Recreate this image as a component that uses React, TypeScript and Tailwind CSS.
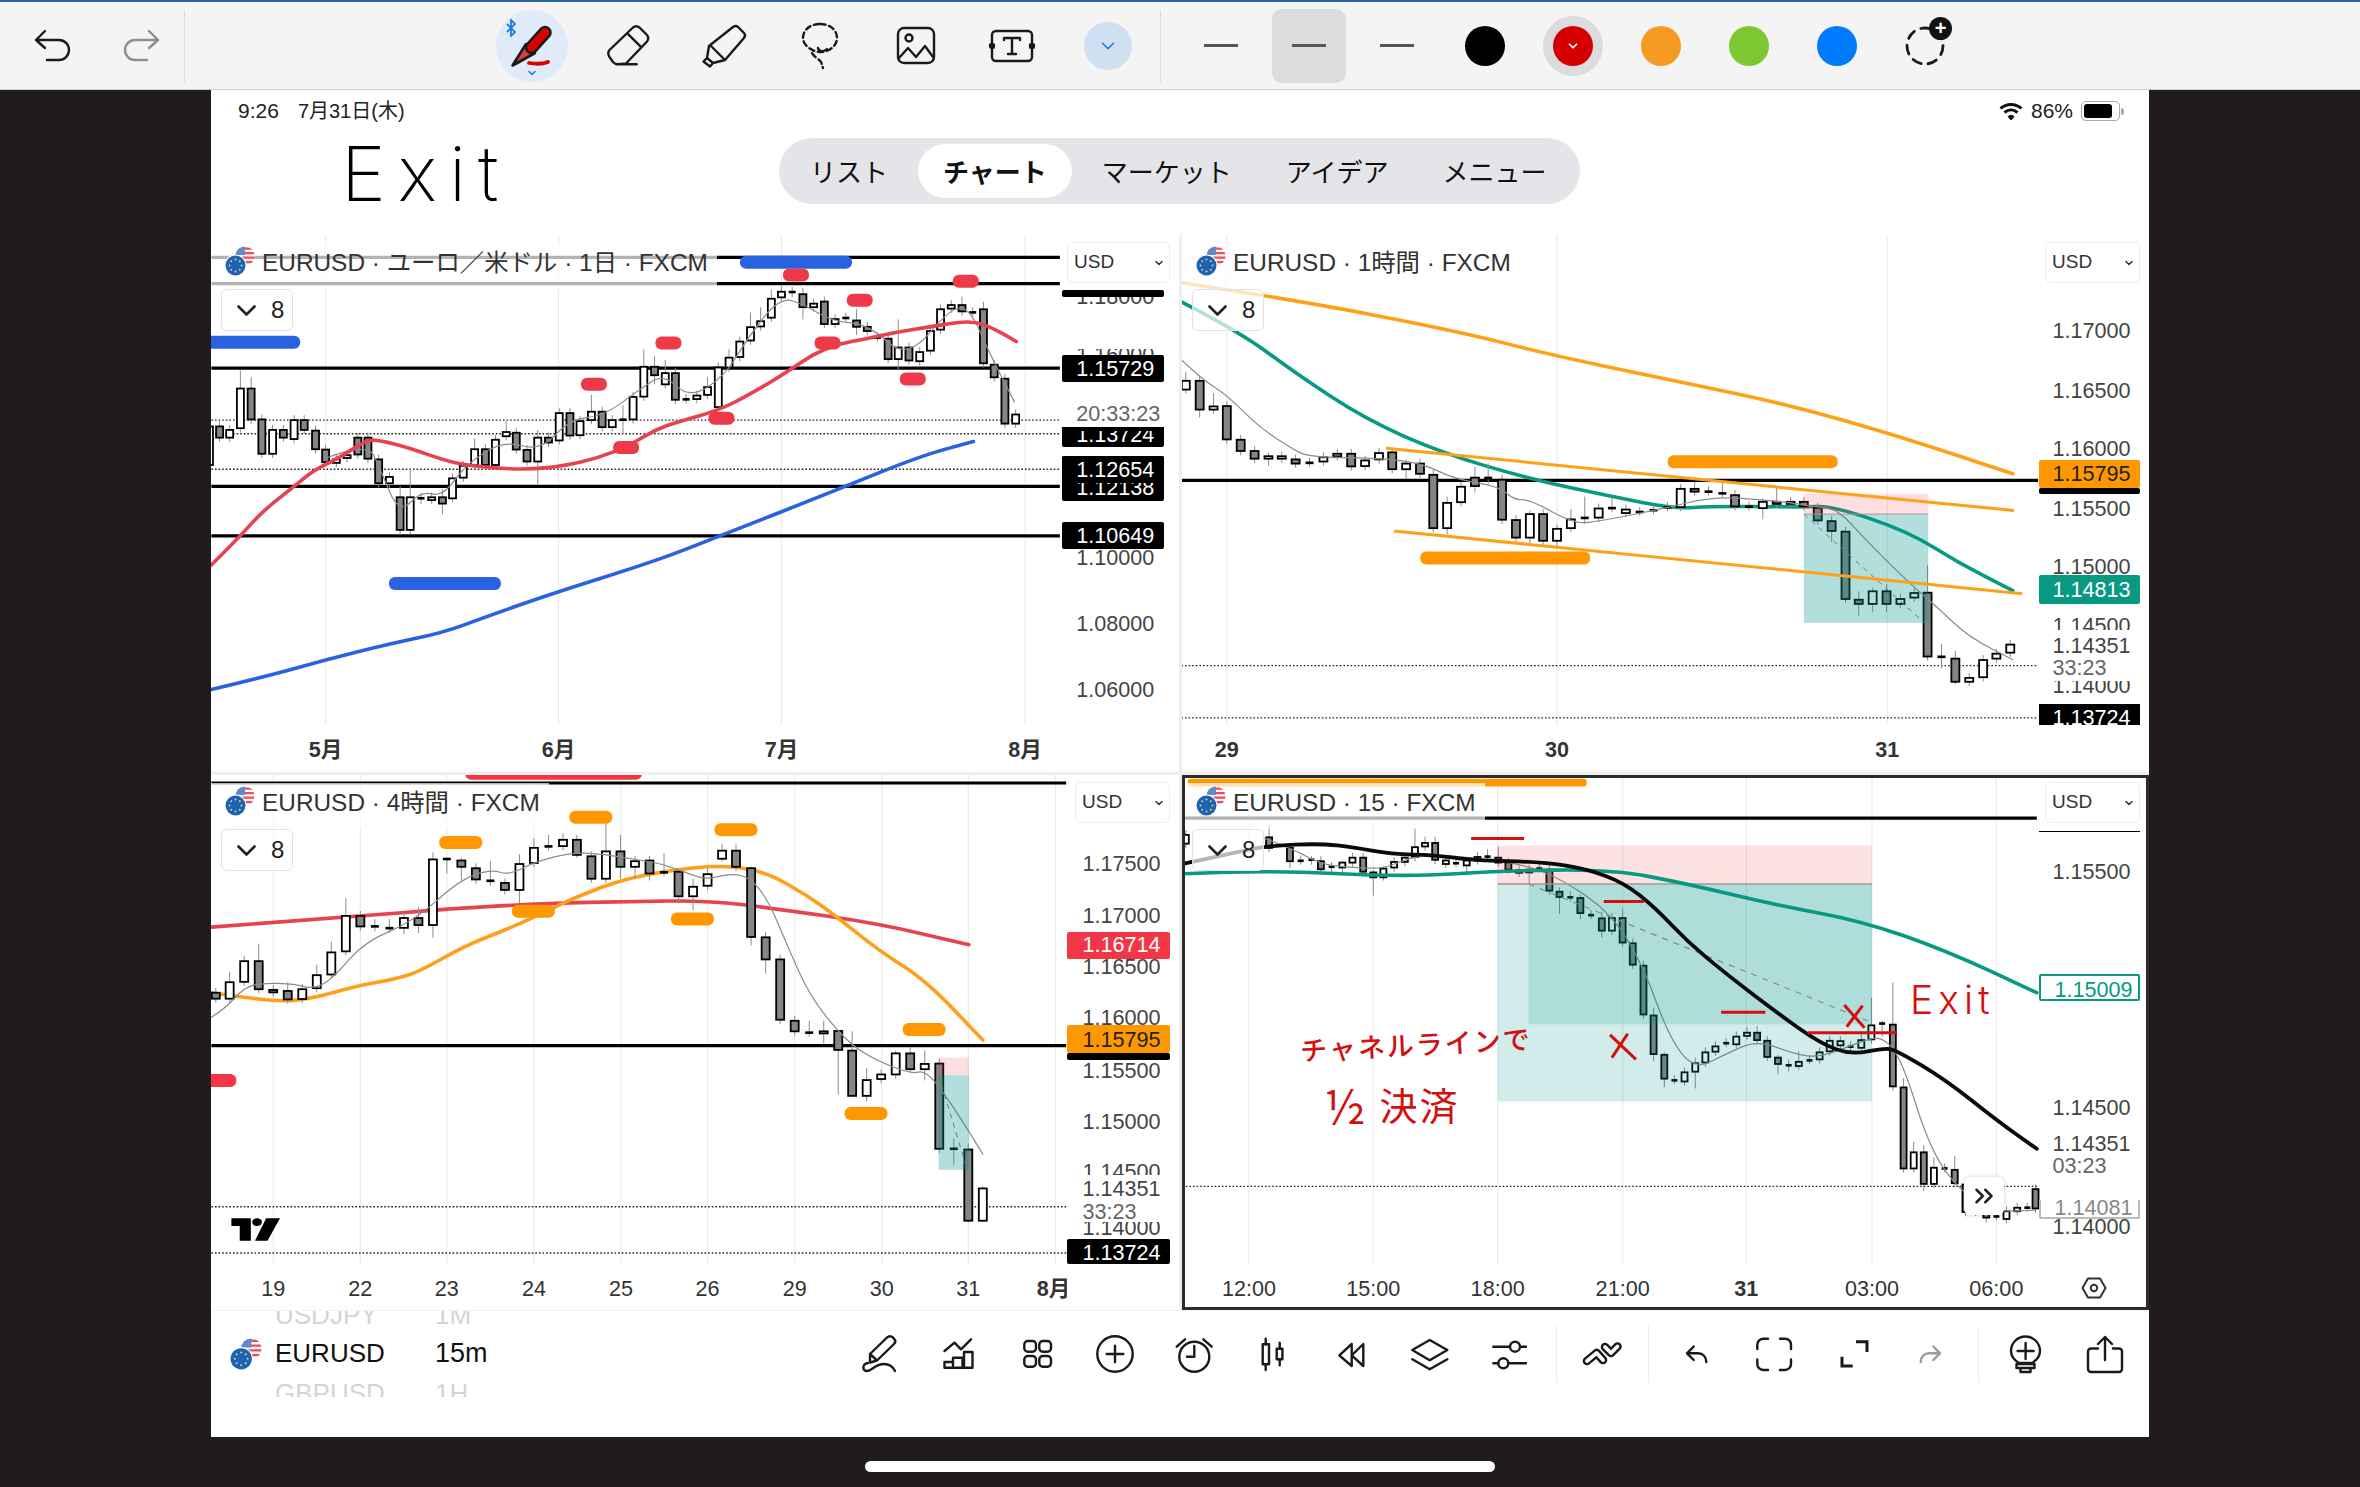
import { ChevronDown, ChevronsRight } from 'lucide-react';
import type { ReactNode } from 'react';

const SX = 1.584;
const SY = 2.851;

// x, body top, body bottom, kind (0 white, 1 gray, 2 flat), wick top, wick bottom. All in crop units.
type Candle = [number, number, number, number, number?, number?];
type Pt = [number, number];
type Label = { t?: string; y?: number; top?: number; bot?: number; cls?: string };
type Dt = [string, number, boolean?];
type Map = { x: (z: number) => number; y: (z: number) => number };

const mk = (ox: number, oy: number, px: number, py: number): Map => ({
  x: (z) => ox + z / SX - px,
  y: (z) => oy + z / SY - py,
});

// midpoint smoothing so the moving averages don't look like polylines
const curve = (m: Map, pts: Pt[]) => {
  const p = pts.map(([a, b]) => [m.x(a), m.y(b)]);
  let d = `M${p[0][0]} ${p[0][1]}`;
  for (let i = 1; i < p.length - 1; i++) {
    const mx = (p[i][0] + p[i + 1][0]) / 2;
    const my = (p[i][1] + p[i + 1][1]) / 2;
    d += ` Q${p[i][0]} ${p[i][1]} ${mx} ${my}`;
  }
  const l = p[p.length - 1];
  return `${d} L${l[0]} ${l[1]}`;
};

function Candles({ m, data, w }: { m: Map; data: Candle[]; w: number }) {
  return (
    <g>
      {data.map(([x, t, b, k, wt, wb], i) => {
        const cx = m.x(x);
        const top = m.y(t);
        const bot = m.y(b);
        return (
          <g key={i}>
            <line x1={cx} x2={cx} y1={m.y(wt ?? t - 14)} y2={m.y(wb ?? b + 12)} stroke="#8c8c8c" strokeWidth="1" />
            {k === 2 ? (
              <rect x={cx - w / 2} y={top - 1} width={w} height="2.6" fill="#000" />
            ) : (
              <rect x={cx - w / 2} y={top} width={w} height={Math.max(bot - top, 2)} fill={k === 1 ? '#858585' : '#fff'} stroke="#000" strokeWidth="1.8" />
            )}
          </g>
        );
      })}
    </g>
  );
}

function Pills({ m, items, fill, w }: { m: Map; items: Pt[]; fill: string; w: number }) {
  return (
    <g>
      {items.map(([x, y], i) => (
        <rect key={i} x={m.x(x) - w / 2} y={m.y(y) - 6.5} width={w} height="13" rx="6" fill={fill} />
      ))}
    </g>
  );
}

function Logo({ size = 30 }: { size?: number }) {
  const stars = [0, 1, 2, 3, 4, 5, 6, 7];
  return (
    <svg width={size} height={size} viewBox="0 0 30 30" className="shrink-0">
      <defs>
        <clipPath id="usFlag">
          <circle cx="20" cy="10" r="9.6" />
        </clipPath>
      </defs>
      <g clipPath="url(#usFlag)">
        <rect x="10" y="0" width="20" height="20" fill="#f6f6f6" />
        <path d="M10 1.5h20v2.2H10zM10 6h20v2.2H10zM10 10.5h20v2.2H10zM10 15h20v2.2H10z" fill="#e8505b" />
        <rect x="10" y="0" width="10" height="9" fill="#5f8ad0" />
      </g>
      <circle cx="10.5" cy="19.5" r="11" fill="#fff" />
      <circle cx="10.5" cy="19.5" r="10" fill="#1c62b9" />
      {stars.map((s) => (
        <circle key={s} cx={10.5 + 6 * Math.cos((s * Math.PI) / 4)} cy={19.5 + 6 * Math.sin((s * Math.PI) / 4)} r="0.95" fill="#f3d34a" />
      ))}
    </svg>
  );
}

function Labels({ m, items, l, r, tx }: { m: Map; items: Label[]; l: number; r: number; tx: number }) {
  return (
    <>
      {items.map((a, i) => {
        const top = m.y(a.top ?? (a.y as number) - 42);
        const bot = m.y(a.bot ?? (a.y as number) + 42);
        return (
          <div
            key={i}
            className={`absolute overflow-hidden whitespace-nowrap text-[21.6px] leading-[28px] ${a.cls ?? 'text-[#444]'}`}
            style={{ left: m.x(l), width: m.x(r) - m.x(l), top, height: bot - top }}
          >
            {a.t && (
              <span className="absolute" style={{ left: m.x(tx) - m.x(l), top: m.y(a.y as number) - top - 14 }}>
                {a.t}
              </span>
            )}
          </div>
        );
      })}
    </>
  );
}

function Dates({ m, items, y }: { m: Map; items: Dt[]; y: number }) {
  return (
    <>
      {items.map(([t, x, b], i) => (
        <span
          key={i}
          className={`absolute -translate-x-1/2 text-[21.6px] leading-[28px] whitespace-nowrap text-[#333] ${b ? 'font-bold' : ''}`}
          style={{ left: m.x(x), top: m.y(y) - 14 }}
        >
          {t}
        </span>
      ))}
    </>
  );
}

function Pane({ title, usd, children, top, over }: { title: string; usd: string; children: ReactNode; top?: ReactNode; over?: ReactNode }) {
  return (
    <div className="relative bg-white overflow-hidden font-['Liberation_Sans','Noto_Sans_CJK_JP',sans-serif]">
      <svg className="absolute inset-0 w-full h-full">{children}</svg>
      {over}
      <div className="absolute left-0 top-[8px] h-[46px] flex items-start pl-[14px] pr-[9px] pt-[3px] bg-white/70 text-[24.4px] leading-[34px] text-[#333] whitespace-nowrap">
        <Logo />
        <span className="ml-[7px]">{title}</span>
      </div>
      <div className="absolute left-[10px] top-[54px] w-[72px] h-[42px] rounded-[6px] border-[1.5px] border-[#e2e2e2] bg-white/70 flex items-center pl-[15px] gap-[15px] text-[24px] text-[#222]">
        <svg width="19" height="11" viewBox="0 0 19 11" fill="none" stroke="#222" strokeWidth="2.6" strokeLinecap="round" strokeLinejoin="round">
          <path d="M1.5 1.5l8 8 8-8" />
        </svg>
        <span>8</span>
      </div>
      <div className={`absolute right-[9px] top-[7px] h-[41px] rounded-[5px] border border-[#eeeeee] bg-white flex items-center justify-between pl-[6px] pr-[4px] text-[19px] text-[#333] ${usd}`}>
        <span>USD</span>
        <ChevronDown className="w-[12px] h-[12px]" strokeWidth={3} />
      </div>
      {top}
    </div>
  );
}

function Grid({ m, xs, b = 1410 }: { m: Map; xs: number[]; b?: number }) {
  return (
    <g>
      {xs.map((x) => (
        <line key={x} x1={m.x(x)} x2={m.x(x)} y1={m.y(15)} y2={m.y(b)} stroke="#ebebeb" strokeWidth="1.2" />
      ))}
    </g>
  );
}

function HLines({ m, l, r, ys, w = 3.2 }: { m: Map; l: number; r: number; ys: number[]; w?: number }) {
  return (
    <g>
      {ys.map((y) => (
        <line key={y} x1={m.x(l)} x2={m.x(r)} y1={m.y(y)} y2={m.y(y)} stroke="#000" strokeWidth={w} />
      ))}
    </g>
  );
}

function Dots({ m, l, r, ys }: { m: Map; l: number; r: number; ys: number[] }) {
  return (
    <g>
      {ys.map((y) => (
        <line key={y} x1={m.x(l)} x2={m.x(r)} y1={m.y(y)} y2={m.y(y)} stroke="#222" strokeWidth="1.4" strokeDasharray="1.6 2" />
      ))}
    </g>
  );
}

function Ma({ m, pts, c, w = 3.6 }: { m: Map; pts: Pt[]; c: string; w?: number }) {
  return <path d={curve(m, pts)} fill="none" stroke={c} strokeWidth={w} strokeLinecap="round" strokeLinejoin="round" />;
}

const BLK = 'bg-black text-white rounded-[2px]';

/* ---------- daily ---------- */
const m1 = mk(200, 230, 211, 235);
const c1: Candle[] = [
  [15, 560, 670, 0], [31, 560, 592, 1], [47, 570, 592, 0], [64, 452, 565, 0, 400], [81, 452, 540, 1, 420], [98, 540, 638, 1],
  [115, 570, 638, 0], [132, 570, 592, 1], [149, 542, 596, 0], [165, 542, 570, 1], [183, 572, 625, 1], [199, 626, 662, 1],
  [216, 654, 664, 0], [233, 642, 650, 0], [250, 592, 640, 1], [266, 592, 652, 1], [283, 654, 722, 1], [300, 704, 722, 0],
  [317, 762, 855, 1, 730, 870], [333, 762, 855, 0, 680], [350, 764, 770, 2], [367, 762, 770, 0], [384, 762, 780, 1, 740, 810],
  [400, 708, 765, 0], [417, 672, 706, 0], [435, 625, 670, 0, 595], [452, 625, 670, 1], [468, 598, 670, 0], [485, 576, 588, 0, 545],
  [501, 578, 626, 1], [518, 627, 660, 1], [535, 592, 660, 0, 570, 725], [552, 592, 606, 1], [569, 522, 600, 0], [586, 522, 586, 1],
  [602, 545, 585, 0], [620, 518, 542, 0, 470], [637, 518, 562, 1], [653, 542, 562, 0], [670, 540, 540, 2, 500, 580], [686, 476, 540, 0],
  [703, 390, 475, 0, 340], [720, 390, 414, 1, 360, 440], [737, 408, 440, 0, 370], [753, 408, 484, 1], [770, 482, 482, 2], [787, 472, 482, 0],
  [804, 448, 470, 0, 420], [821, 392, 505, 0], [838, 364, 392, 0, 340], [855, 318, 362, 0], [872, 277, 315, 0, 235], [888, 260, 275, 0, 220],
  [905, 196, 250, 0, 170], [921, 176, 192, 0, 160], [938, 176, 180, 2], [955, 183, 220, 1, 165, 255], [972, 210, 220, 0], [989, 204, 268, 1],
  [1006, 254, 268, 0], [1023, 250, 250, 2], [1040, 258, 276, 1, 225, 300], [1057, 276, 288, 1], [1073, 306, 306, 2], [1090, 310, 368, 1],
  [1106, 335, 368, 0, 255, 400], [1123, 335, 372, 1], [1140, 348, 374, 0], [1157, 288, 344, 0], [1173, 226, 284, 0], [1190, 214, 224, 0, 200],
  [1207, 214, 232, 1, 190], [1224, 234, 234, 2], [1241, 226, 380, 1, 205], [1258, 384, 420, 1], [1275, 424, 552, 1], [1292, 526, 552, 0],
];
const red1: Pt[] = [[18, 955], [60, 880], [100, 800], [150, 730], [180, 685], [220, 650], [265, 598], [285, 600], [330, 620], [400, 665], [460, 678], [520, 683], [580, 672], [630, 650], [680, 615], [720, 570], [760, 545], [820, 515], [870, 470], [930, 405], [970, 355], [1010, 325], [1050, 312], [1100, 292], [1150, 278], [1200, 263], [1230, 262], [1260, 283], [1293, 318]];
const blue1: Pt[] = [[18, 1310], [100, 1275], [200, 1225], [300, 1180], [385, 1148], [450, 1105], [560, 1035], [720, 945], [820, 875], [1010, 740], [1140, 645], [1225, 603]];
const gray1: Pt[] = [[200, 650], [265, 605], [285, 680], [315, 810], [350, 745], [385, 760], [420, 670], [480, 600], [540, 630], [585, 540], [640, 530], [700, 450], [735, 410], [775, 480], [830, 420], [870, 300], [920, 190], [960, 215], [1000, 260], [1060, 270], [1120, 370], [1190, 220], [1220, 225], [1250, 350], [1290, 490]];

function DayPane() {
  const m = m1;
  return (
    <Pane
      title="EURUSD · ユーロ／米ドル · 1日 · FXCM"
      usd="w-[103px]"
      top={
        <>
          <Labels
            m={m}
            l={1365}
            r={1527}
            tx={1388}
            items={[
              { t: '1.18000', y: 190, top: 192, bot: 215 },
              { top: 172, bot: 192, cls: BLK },
              { t: '1.16000', y: 356, top: 340, bot: 356 },
              { t: '1.15729', y: 397, top: 355, bot: 433, cls: BLK },
              { t: '20:33:23', y: 525, cls: 'text-[#666]' },
              { t: '1.13724', y: 584, top: 563, bot: 620, cls: BLK },
              { top: 563, bot: 574, cls: 'bg-black' },
              { t: '1.12138', y: 735, top: 643, bot: 772, cls: BLK },
              { t: '1.12654', y: 684, top: 643, bot: 722, cls: BLK },
              { t: '1.10000', y: 935, top: 905, bot: 975 },
              { t: '1.10649', y: 872, top: 832, bot: 910, cls: BLK },
              { t: '1.08000', y: 1122 },
              { t: '1.06000', y: 1312 },
            ]}
          />
          <Dates m={m} y={1483} items={[['5月', 199, true], ['6月', 568, true], ['7月', 921, true], ['8月', 1307, true]]} />
        </>
      }
    >
      <Grid m={m} xs={[199, 568, 921, 1307]} />
      <HLines m={m} l={18} r={1362} ys={[78, 153, 394, 731, 872]} />
      <Dots m={m} l={18} r={1362} ys={[542, 581, 682]} />
      <Candles m={m} data={c1} w={7} />
      <Ma m={m} pts={gray1} c="#8c8c8c" w={1.2} />
      <Ma m={m} pts={red1} c="#e8414f" />
      <Ma m={m} pts={blue1} c="#2962e0" />
      <Pills m={m} fill="#2962e0" w={112} items={[[944, 92], [70, 320], [388, 1008]]} />
      <Pills m={m} fill="#ee3a48" w={26} items={[[944, 128], [1213, 146], [1045, 200], [742, 322], [994, 322], [624, 440], [1129, 425], [826, 537], [675, 620]]} />
    </Pane>
  );
}

/* ---------- 1 hour ---------- */
const m2 = mk(1170, 230, 1182, 235);
const c2: Candle[] = [
  [25, 430, 455, 0, 405], [47, 430, 512, 1, 415, 535], [69, 503, 512, 0, 465], [90, 502, 597, 1], [112, 598, 630, 1], [134, 630, 652, 1],
  [156, 645, 652, 0, 635, 672], [177, 645, 652, 0], [199, 654, 666, 1], [221, 663, 663, 2], [243, 648, 660, 0], [265, 638, 645, 0],
  [287, 638, 674, 1], [309, 657, 673, 0], [331, 636, 654, 0], [352, 634, 682, 1], [374, 666, 682, 0, 655, 710], [396, 666, 695, 1],
  [417, 698, 850, 1], [439, 778, 850, 0, 760, 868], [461, 732, 776, 0], [483, 706, 730, 1, 675, 748], [504, 706, 712, 2, 665], [526, 712, 826, 1],
  [548, 827, 877, 1], [570, 810, 877, 0, 800, 893], [591, 810, 886, 1], [613, 852, 886, 0, 840, 905], [635, 825, 850, 0, 795], [657, 820, 820, 2, 760, 838],
  [679, 794, 820, 0], [700, 792, 792, 2, 765, 805], [722, 797, 807, 0], [744, 803, 803, 2], [766, 798, 798, 2], [788, 790, 790, 2], [809, 738, 790, 0],
  [831, 738, 746, 1, 718], [853, 745, 745, 2], [875, 750, 750, 2, 720], [895, 756, 788, 1], [917, 788, 788, 2], [939, 775, 793, 0, 765, 825],
  [961, 775, 781, 0, 735], [983, 775, 781, 0], [1004, 775, 788, 1], [1026, 792, 828, 1], [1048, 830, 858, 1, 815, 890], [1070, 860, 1052, 1],
  [1091, 1054, 1066, 1, 1030, 1100], [1113, 1030, 1066, 0, 1020, 1090], [1135, 1030, 1066, 1, 1010, 1090], [1157, 1052, 1066, 0], [1179, 1035, 1048, 0],
  [1200, 1034, 1216, 1, 955], [1222, 1216, 1216, 2, 1180, 1250], [1244, 1222, 1288, 1, 1200, 1295], [1266, 1277, 1288, 0], [1288, 1226, 1275, 0], [1309, 1208, 1222, 0], [1331, 1182, 1205, 0],
];
const or2: Pt[] = [[18, 150], [200, 200], [460, 290], [600, 355], [800, 430], [980, 498], [1150, 585], [1335, 695]];
const te2: Pt[] = [[18, 205], [110, 290], [200, 410], [310, 540], [430, 635], [570, 710], [700, 760], [800, 795], [860, 787], [1000, 790], [1050, 787], [1170, 860], [1250, 950], [1335, 1028]];
const gr2: Pt[] = [[18, 370], [50, 425], [90, 470], [140, 560], [190, 620], [220, 648], [330, 650], [400, 665], [450, 710], [520, 730], [545, 770], [570, 768], [640, 838], [680, 830], [780, 795], [860, 760], [950, 770], [1030, 790], [1060, 800], [1100, 880], [1170, 1005], [1215, 1075], [1265, 1160], [1335, 1225]];

function HourPane() {
  const m = m2;
  return (
    <Pane
      title="EURUSD · 1時間 · FXCM"
      usd="w-[95px]"
      top={
        <>
          <Labels
            m={m}
            l={1377}
            r={1537}
            tx={1398}
            items={[
              { t: '1.17000', y: 288 },
              { t: '1.16500', y: 458 },
              { t: '1.16000', y: 625, top: 590, bot: 655 },
              { top: 735, bot: 753, cls: BLK },
              { t: '1.15795', y: 696, top: 655, bot: 735, cls: 'bg-[#ff9800] text-[#222] rounded-[2px]' },
              { t: '1.15500', y: 795 },
              { t: '1.15000', y: 962, top: 925, bot: 985 },
              { t: '1.14813', y: 1026, top: 985, bot: 1065, cls: 'bg-[#089981] text-white rounded-[2px]' },
              { t: '1.14500', y: 1130, top: 1105, bot: 1141 },
              { t: '1.14351', y: 1185, top: 1145, bot: 1215 },
              { t: '33:23', y: 1250, top: 1215, bot: 1285, cls: 'text-[#666]' },
              { t: '1.14000', y: 1300, top: 1285, bot: 1330 },
              { t: '1.13724', y: 1392, top: 1352, bot: 1412, cls: 'bg-black text-white' },
            ]}
          />
          <Dates m={m} y={1483} items={[['29', 90, true], ['30', 613, true], ['31', 1136, true]]} />
        </>
      }
    >
      <Grid m={m} xs={[90, 613, 1136]} />
      <HLines m={m} l={18} r={1375} ys={[714]} />
      <Dots m={m} l={18} r={1375} ys={[1242, 1391]} />
      <Ma m={m} pts={or2} c="#ffa117" />
      <Ma m={m} pts={te2} c="#089981" />
      <Candles m={m} data={c2} w={8} />
      <Ma m={m} pts={gr2} c="#8c8c8c" w={1.2} />
      <rect x={m.x(1004)} y={m.y(752)} width={197 / SX} height={58 / SY} fill="#f23645" fillOpacity="0.16" />
      <rect x={m.x(1004)} y={m.y(810)} width={197 / SX} height={310 / SY} fill="#009688" fillOpacity="0.3" />
      <line x1={m.x(1004)} x2={m.x(1201)} y1={m.y(810)} y2={m.y(810)} stroke="#999" strokeWidth="1" />
      <line x1={m.x(1004)} x2={m.x(1195)} y1={m.y(810)} y2={m.y(1120)} stroke="#777" strokeWidth="1" strokeDasharray="5 5" />
      <line x1={m.x(342)} x2={m.x(1337)} y1={m.y(622)} y2={m.y(800)} stroke="#ffa117" strokeWidth="3" />
      <line x1={m.x(355)} x2={m.x(1350)} y1={m.y(858)} y2={m.y(1037)} stroke="#ffa117" strokeWidth="3" />
      <Pills m={m} fill="#ff9800" w={170} items={[[923, 661], [531, 935]]} />
    </Pane>
  );
}

/* ---------- 4 hours ---------- */
const m3 = mk(200, 770, 211, 775);
const c3: Candle[] = [
  [25, 635, 652, 1], [47, 605, 652, 0, 575], [70, 545, 604, 0, 530], [93, 545, 625, 1, 495], [116, 627, 634, 1], [139, 630, 654, 1, 605], [162, 625, 653, 0, 610, 665],
  [185, 585, 622, 0, 555], [208, 520, 583, 0, 490], [231, 416, 517, 0, 365], [254, 416, 446, 1], [277, 445, 445, 2, 425, 460], [300, 450, 450, 2, 425, 465], [323, 422, 450, 0, 405, 468],
  [346, 422, 442, 1, 390, 465], [369, 255, 442, 0, 235, 478], [391, 253, 253, 2, 253, 295], [414, 258, 276, 1, 250, 315], [437, 280, 312, 1], [460, 315, 315, 2, 260, 330], [483, 322, 342, 1, 310, 355],
  [506, 268, 342, 0, 240, 380], [529, 222, 265, 0, 195], [552, 217, 217, 2, 185], [575, 199, 217, 0, 180], [597, 199, 242, 1, 185, 250], [620, 246, 310, 1], [643, 232, 310, 0, 130],
  [666, 232, 276, 1, 185, 310], [689, 260, 276, 0, 245, 310], [712, 258, 295, 1, 245, 315], [735, 291, 291, 2, 238], [758, 290, 360, 1, 285, 380], [781, 333, 360, 0, 310, 400], [804, 297, 330, 0, 280],
  [827, 230, 253, 0, 210, 260], [849, 230, 276, 1, 212], [873, 280, 476, 1, 275, 500], [896, 477, 540, 1, 462, 580], [919, 540, 712, 1], [942, 715, 745, 1], [965, 748, 748, 2, 715], [988, 745, 751, 0, 715, 780],
  [1011, 744, 798, 1, 742, 925], [1033, 800, 929, 1, 745, 930], [1056, 884, 929, 0, 850, 945], [1079, 868, 881, 0], [1102, 808, 868, 0, 800], [1125, 808, 853, 1, 790], [1148, 838, 853, 0, 800, 885],
  [1171, 837, 1080, 1], [1194, 1079, 1079, 2, 1050, 1125], [1217, 1082, 1285, 1, 1065, 1290], [1240, 1193, 1285, 0, 1187, 1287],
];
const re3: Pt[] = [[18, 448], [230, 420], [400, 395], [550, 380], [680, 375], [805, 372], [910, 395], [1075, 438], [1218, 498]];
const or3: Pt[] = [[18, 635], [110, 660], [170, 655], [250, 615], [300, 600], [345, 578], [420, 500], [500, 445], [590, 365], [680, 305], [790, 275], [850, 275], [900, 295], [960, 355], [1010, 420], [1075, 515], [1150, 600], [1240, 770]];
const gr3: Pt[] = [[18, 705], [40, 680], [70, 620], [100, 607], [150, 610], [180, 625], [210, 595], [260, 490], [340, 430], [410, 315], [460, 283], [490, 300], [530, 262], [590, 235], [640, 240], [690, 255], [735, 268], [780, 300], [805, 312], [840, 295], [870, 305], [900, 370], [930, 500], [965, 640], [1010, 745], [1050, 810], [1125, 868], [1150, 855], [1190, 950], [1240, 1095]];

function FourPane() {
  const m = m3;
  return (
    <Pane
      title="EURUSD · 4時間 · FXCM"
      usd="w-[95px]"
      over={
        <svg className="absolute left-[19px] top-[442px] w-[50px] h-[25px]" viewBox="0 0 36 22" preserveAspectRatio="none">
          <path d="M15 1H1v7h6v13h8zM26 1h10l-9 20h-9zM23 4.5a3.5 3.5 0 1 1-7 0 3.5 3.5 0 0 1 7 0z" fill="#000" />
        </svg>
      }
      top={
        <>
          <Dates m={m} y={1480} items={[['19', 116], ['22', 254], ['23', 391], ['24', 529], ['25', 667], ['26', 804], ['29', 942], ['30', 1080], ['31', 1217], ['8月', 1352, true]]} />
          <Labels
            m={m}
            l={1373}
            r={1537}
            tx={1398}
            items={[
              { t: '1.17500', y: 268 },
              { t: '1.17000', y: 415 },
              { t: '1.16500', y: 563 },
              { t: '1.16714', y: 500, top: 462, bot: 538, cls: 'bg-[#f23645] text-white rounded-[2px]' },
              { t: '1.16000', y: 708, top: 670, bot: 728 },
              { top: 806, bot: 826, cls: BLK },
              { t: '1.15795', y: 770, top: 728, bot: 808, cls: 'bg-[#ff9800] text-[#222] rounded-[2px]' },
              { t: '1.15500', y: 857, top: 826, bot: 895 },
              { t: '1.15000', y: 1004 },
              { t: '1.14500', y: 1145, top: 1120, bot: 1156 },
              { t: '1.14351', y: 1195, top: 1160, bot: 1228 },
              { t: '33:23', y: 1260, top: 1228, bot: 1290, cls: 'text-[#666]' },
              { t: '1.14000', y: 1305, top: 1290, bot: 1330 },
              { t: '1.13724', y: 1378, top: 1338, bot: 1408, cls: BLK },
              { top: 1425, bot: 1530, cls: 'bg-white' },
            ]}
          />
        </>
      }
    >
      <Grid m={m} xs={[116, 254, 391, 529, 667, 804, 942, 1080, 1217, 1355]} />
      <HLines m={m} l={18} r={1372} ys={[37, 786]} />
      <Dots m={m} l={18} r={1372} ys={[1245, 1377]} />
      <Pills m={m} fill="#f23645" w={177} items={[[560, 9]]} />
      <Pills m={m} fill="#f23645" w={50} items={[[18, 885]]} />
      <Ma m={m} pts={re3} c="#e8414f" />
      <Ma m={m} pts={or3} c="#ff9f1c" />
      <Candles m={m} data={c3} w={8} />
      <Ma m={m} pts={gr3} c="#8c8c8c" w={1.2} />
      <rect x={m.x(1170)} y={m.y(820)} width={48 / SX} height={50 / SY} fill="#f23645" fillOpacity="0.16" />
      <rect x={m.x(1170)} y={m.y(870)} width={48 / SX} height={270 / SY} fill="#009688" fillOpacity="0.3" />
      <line x1={m.x(1170)} x2={m.x(1215)} y1={m.y(870)} y2={m.y(1138)} stroke="#777" strokeWidth="1" strokeDasharray="5 5" />
      <Pills m={m} fill="#ff9800" w={43} items={[[619, 135], [849, 170], [413, 207], [528, 403], [780, 425], [1055, 979], [1147, 740]]} />
    </Pane>
  );
}

/* ---------- 15 minutes ---------- */
const m4 = mk(1170, 770, 1182, 775);
const c4: Candle[] = [
  [25, 185, 210, 0], [157, 192, 222, 1, 155], [190, 222, 260, 1, 215, 280], [207, 258, 258, 2], [224, 255, 255, 2, 245, 270], [239, 260, 283, 1], [256, 275, 275, 2, 262, 295], [273, 264, 278, 0, 258, 292], [289, 250, 264, 0],
  [306, 250, 290, 1], [322, 292, 306, 1, 285, 358], [338, 281, 306, 0, 275, 315], [355, 262, 278, 0], [372, 250, 262, 0], [388, 220, 248, 0, 165], [404, 208, 218, 0, 190], [420, 208, 256, 1, 190], [437, 258, 268, 0], [453, 265, 265, 2],
  [470, 258, 272, 0, 248, 300], [487, 248, 258, 0], [503, 246, 246, 2, 225], [520, 250, 264, 1, 220], [536, 264, 284, 1], [553, 286, 293, 0], [569, 284, 292, 0, 270, 325], [585, 280, 280, 2], [601, 284, 344, 1], [617, 347, 362, 1, 335, 410],
  [634, 362, 362, 2, 345, 375], [650, 365, 408, 1, 355, 425], [667, 413, 413, 2], [684, 423, 458, 1, 405, 478], [700, 422, 458, 0], [717, 422, 492, 1, 395], [733, 494, 555, 1, 480], [750, 558, 697, 1], [766, 700, 810, 1, 678, 830],
  [783, 812, 880, 1, 805, 905], [799, 884, 884, 2], [815, 862, 888, 0], [832, 836, 860, 0, 820, 908], [848, 805, 834, 0], [864, 788, 803, 0], [881, 778, 778, 2, 765], [897, 760, 782, 0], [914, 749, 758, 0, 733], [930, 749, 770, 1, 730],
  [946, 772, 818, 1], [963, 820, 838, 1, 812, 868], [980, 841, 841, 2, 825, 860], [996, 832, 844, 0, 802], [1013, 827, 827, 2], [1029, 805, 825, 0], [1045, 772, 802, 0], [1062, 773, 785, 0], [1078, 788, 788, 2], [1095, 770, 792, 0, 745],
  [1111, 728, 768, 0, 650], [1128, 722, 722, 2, 715, 760], [1145, 726, 902, 1, 605], [1162, 905, 1136, 1, 878], [1178, 1090, 1136, 0, 1060], [1194, 1090, 1180, 1, 1070, 1200], [1210, 1134, 1180, 0, 1105], [1227, 1135, 1135, 2], [1243, 1140, 1178, 1, 1100],
  [1260, 1182, 1260, 1], [1276, 1260, 1260, 2], [1293, 1258, 1276, 1, 1240, 1290], [1309, 1272, 1272, 2], [1325, 1258, 1280, 0], [1342, 1248, 1258, 0], [1358, 1247, 1247, 2], [1371, 1195, 1250, 1],
];
const bl4: Pt[] = [[22, 267], [90, 240], [157, 215], [240, 210], [290, 220], [350, 240], [420, 242], [480, 258], [590, 262], [660, 282], [720, 322], [770, 395], [820, 490], [880, 580], [960, 690], [1030, 780], [1080, 812], [1130, 793], [1150, 798], [1230, 885], [1310, 1000], [1373, 1080]];
const te4: Pt[] = [[22, 296], [150, 285], [370, 305], [520, 288], [700, 283], [820, 325], [960, 385], [1095, 430], [1230, 515], [1373, 635]];
const gr4: Pt[] = [[150, 195], [200, 230], [240, 270], [300, 280], [340, 280], [380, 250], [420, 240], [500, 255], [560, 270], [620, 310], [700, 410], [750, 560], [790, 760], [830, 855], [880, 810], [930, 770], [990, 810], [1030, 820], [1100, 770], [1130, 760], [1160, 830], [1200, 1060], [1240, 1180], [1300, 1260], [1370, 1255]];
const ink: number[][] = [[477, 195, 561, 195], [687, 375, 751, 375], [873, 691, 943, 691], [1010, 749, 1150, 749], [697, 755, 738, 825], [725, 752, 700, 820], [1068, 670, 1100, 735], [1097, 672, 1072, 732]];

function FifteenPane() {
  const m = m4;
  return (
    <Pane
      title="EURUSD · 15 · FXCM"
      usd="w-[95px]"
      top={
        <>
          <Dates m={m} y={1480} items={[['12:00', 125], ['15:00', 322], ['18:00', 519], ['21:00', 717], ['31', 913, true], ['03:00', 1112], ['06:00', 1309]]} />
          <Labels
            m={m}
            l={1377}
            r={1537}
            tx={1398}
            items={[
              { top: 174, bot: 178, cls: 'bg-black' },
              { t: '1.15500', y: 292 },
              { t: '1.15009', y: 622, top: 582, bot: 660, cls: 'bg-white border-2 border-[#089981] text-[#089981] rounded-[2px]' },
              { t: '1.14500', y: 965 },
              { t: '1.14351', y: 1065, top: 1030, bot: 1100 },
              { t: '03:23', y: 1130, top: 1100, bot: 1165, cls: 'text-[#666]' },
              { t: '1.14000', y: 1302, top: 1270, bot: 1340 },
              { t: '1.14081', y: 1248, top: 1225, bot: 1280, cls: 'bg-white border-x-2 border-b-2 border-[#bbbbbb] text-[#888] rounded-b-[2px]' },
            ]}
          />
          <svg className="absolute right-[42px] top-[502px] w-[26px] h-[22px]" viewBox="0 0 26 22" fill="none" stroke="#333" strokeWidth="2" strokeLinejoin="round">
            <path d="M1.5 11L7 1.5h12L24.5 11 19 20.5H7z" />
            <circle cx="13" cy="11" r="3.2" />
          </svg>
          <div className="absolute left-[782px] top-[402px] w-[40px] h-[38px] rounded-[6px] bg-white shadow-[0_0_5px_rgba(0,0,0,0.18)] flex items-center justify-center text-[#222]">
            <ChevronsRight className="w-[30px] h-[30px]" strokeWidth={2} />
          </div>
          <span className="absolute left-[118px] top-[250px] text-[27px] leading-[38px] tracking-[2px] font-medium text-[#d30f0f] -rotate-3 whitespace-nowrap font-['Noto_Sans_CJK_JP',sans-serif]">チャネルラインで</span>
          <div className="absolute left-[142px] top-[305px] flex items-center gap-[14px] text-[#d30f0f] leading-[48px] whitespace-nowrap font-['Noto_Sans_CJK_JP',sans-serif]">
            <span className="text-[46px]">½</span>
            <span className="text-[38px] tracking-[2px]">決済</span>
          </div>
          <span className="absolute left-[728px] top-[201px] text-[39px] leading-[48px] tracking-[5px] text-[#d30f0f] font-light font-['Inter',sans-serif]">Exit</span>
          <div className="absolute inset-0 border-[3px] border-[#2c2c2c] pointer-events-none" />
        </>
      }
    >
      <Grid m={m} xs={[125, 322, 519, 717, 913, 1112, 1309]} />
      <rect x={m.x(28)} y={m.y(25)} width={632 / SX} height={22 / SY} rx="3" fill="#ff9800" />
      <HLines m={m} l={22} r={1373} ys={[137]} />
      <Dots m={m} l={25} r={1375} ys={[1187]} />
      <Candles m={m} data={c4} w={6} />
      <Ma m={m} pts={gr4} c="#8c8c8c" w={1.2} />
      <rect x={m.x(519)} y={m.y(215)} width={593 / SX} height={110 / SY} fill="#f23645" fillOpacity="0.15" />
      <rect x={m.x(519)} y={m.y(325)} width={593 / SX} height={620 / SY} fill="#009688" fillOpacity="0.18" />
      <rect x={m.x(568)} y={m.y(328)} width={544 / SX} height={397 / SY} fill="#009688" fillOpacity="0.16" />
      <line x1={m.x(519)} x2={m.x(1112)} y1={m.y(325)} y2={m.y(325)} stroke="#999" strokeWidth="1.5" />
      <line x1={m.x(568)} x2={m.x(1105)} y1={m.y(325)} y2={m.y(715)} stroke="#888" strokeWidth="1.2" strokeDasharray="6 6" />
      <Ma m={m} pts={te4} c="#089981" />
      <Ma m={m} pts={bl4} c="#0a0a0a" w={3.8} />
      {ink.map(([a, b, c, d], i) => (
        <line key={i} x1={m.x(a)} y1={m.y(b)} x2={m.x(c)} y2={m.y(d)} stroke="#d30f0f" strokeWidth="3" />
      ))}
    </Pane>
  );
}

/* ---------- top toolbar ---------- */
function Ic({ children, s = 48 }: { children: ReactNode; s?: number }) {
  return (
    <svg width={s} height={s} viewBox="0 0 48 48" fill="none" stroke="currentColor" strokeWidth="2.4" strokeLinecap="round" strokeLinejoin="round">
      {children}
    </svg>
  );
}

function Cell({ w, children }: { w: string; children: ReactNode }) {
  return <div className={`${w} h-full flex items-center justify-center shrink-0`}>{children}</div>;
}

function Dash() {
  return <div className="w-[34px] h-[3px] bg-[#555]" />;
}

function Dot({ cls }: { cls: string }) {
  return <div className={`w-[40px] h-[40px] rounded-full ${cls}`} />;
}

function Toolbar() {
  return (
    <div className="h-[90px] border-t-2 border-t-[#2f63a8] border-b border-b-[#cccccc] bg-[#f4f4f4] flex items-center pl-[9px] text-[#1a1a1a] shrink-0">
      <Cell w="w-[88px]">
        <Ic>
          <path d="M16 9L7 18l9 8M7 18h23a10 10 0 0 1 0 20H18" />
        </Ic>
      </Cell>
      <Cell w="w-[88px]">
        <div className="text-[#8e8e8e]">
          <Ic>
            <path d="M32 9l9 9-9 8M41 18H18a10 10 0 0 0 0 20h12" />
          </Ic>
        </div>
      </Cell>
      <div className="w-px h-[72px] bg-[#dcdcdc] ml-[-1px] shrink-0" />
      <div className="ml-[299px] flex h-full items-center">
        <Cell w="w-[96px]">
          <div className="relative w-[72px] h-[72px] rounded-full bg-[#dfebf9]">
            <svg className="absolute left-[6px] top-[6px]" width="60" height="60" viewBox="0 0 60 60" fill="none" strokeLinejoin="round" strokeLinecap="round">
              <path d="M24 28l9 9-16 9-6.5 3.5z" fill="#d94040" stroke="#1a1a1a" strokeWidth="2.6" />
              <path d="M11 49l2-5 3 3z" fill="#1a1a1a" stroke="#1a1a1a" />
              <path d="M43 16.5L29.5 31.5" stroke="#1a1a1a" strokeWidth="13.5" />
              <path d="M43 16.5L29.5 31.5" stroke="#d80000" strokeWidth="8.5" />
              <path d="M27 47c6 1 14 1 19-1" stroke="#d80000" strokeWidth="3.8" />
            </svg>
            <span className="absolute left-[10px] top-[9px] text-[#1c7ce0]">
              <svg width="10" height="18" viewBox="0 0 10 18" fill="none" stroke="currentColor" strokeWidth="1.8">
                <path d="M1 5l8 8-4 4V1l4 4-8 8" />
              </svg>
            </span>
            <ChevronDown className="absolute bottom-[3px] left-[30px] w-[12px] h-[12px] text-[#1c7ce0]" strokeWidth={3} />
          </div>
        </Cell>
        <Cell w="w-[96px]">
          <Ic>
            <path d="M29 5.5Q32 3 35.5 5.5L43 13Q45.5 16 43 19.5L22 41.5 14 42.3Q11 42.3 9 40L5.5 35Q3 31 5.5 28zM24.3 12.3L36.7 24.7M12.7 42.3h20" />
          </Ic>
        </Cell>
        <Cell w="w-[96px]">
          <Ic>
            <path d="M33 5Q36 3 38 5L44 11Q46 13 44 16L25 38 13 41 7 36 9 24zM11 24L25 38M7 36L3.5 39.5 10 44.5 13 41" />
          </Ic>
        </Cell>
        <Cell w="w-[96px]">
          <Ic>
            <path d="M24 2c10 0 17 6 17 14 0 8-8 14-16 14S7 24 7 16C7 8 14 2 24 2zM16 31c2 4 7 6 9 9 1 2 1 3 2 6" strokeDasharray="5.5 3.6" />
            <path d="M22 26c1 4 6 4 9 1" />
          </Ic>
        </Cell>
        <Cell w="w-[96px]">
          <Ic>
            <rect x="6" y="6" width="36" height="35" rx="6" />
            <circle cx="17" cy="16" r="3.5" />
            <path d="M7 36l9-10 8 9 9-11 8 11" />
          </Ic>
        </Cell>
        <Cell w="w-[96px]">
          <Ic>
            <rect x="4" y="9" width="40" height="30" rx="4" />
            <path d="M16 18v-2h16v2M24 16v16M20 32h8" />
            <circle cx="4" cy="24" r="2" fill="currentColor" />
            <circle cx="44" cy="24" r="2" fill="currentColor" />
          </Ic>
        </Cell>
        <Cell w="w-[96px]">
          <div className="w-[48px] h-[48px] rounded-full bg-[#cfe0f1] flex items-center justify-center text-[#1c7ce0]">
            <ChevronDown className="w-[22px] h-[22px]" strokeWidth={1.8} />
          </div>
        </Cell>
      </div>
      <div className="w-px h-[72px] bg-[#dcdcdc] ml-[4px] shrink-0" />
      <div className="ml-[16px] flex h-full items-center">
        <Cell w="w-[88px]">
          <Dash />
        </Cell>
        <Cell w="w-[88px]">
          <div className="w-[74px] h-[74px] rounded-[10px] bg-[#dcdcde] flex items-center justify-center">
            <Dash />
          </div>
        </Cell>
        <Cell w="w-[88px]">
          <Dash />
        </Cell>
        <Cell w="w-[88px]">
          <Dot cls="bg-black" />
        </Cell>
        <Cell w="w-[88px]">
          <div className="w-[60px] h-[60px] rounded-full bg-[#dcdcdf] flex items-center justify-center">
            <div className="w-[40px] h-[40px] rounded-full bg-[#d40000] flex items-center justify-center text-white">
              <ChevronDown className="w-[14px] h-[14px]" strokeWidth={3} />
            </div>
          </div>
        </Cell>
        <Cell w="w-[88px]">
          <Dot cls="bg-[#f59a23]" />
        </Cell>
        <Cell w="w-[88px]">
          <Dot cls="bg-[#7dc733]" />
        </Cell>
        <Cell w="w-[88px]">
          <Dot cls="bg-[#007aff]" />
        </Cell>
        <Cell w="w-[88px]">
          <div className="relative w-[40px] h-[40px]">
            <svg width="40" height="40" viewBox="0 0 40 40" fill="none" stroke="#1a1a1a" strokeWidth="2.8" strokeLinecap="round">
              <circle cx="20" cy="20" r="18" strokeDasharray="9 7" />
            </svg>
            <span className="absolute right-[-7px] top-[-9px] w-[23px] h-[23px] rounded-full bg-[#111] text-white flex items-center justify-center text-[20px] leading-none font-bold font-['Liberation_Sans',sans-serif]">+</span>
          </div>
        </Cell>
      </div>
    </div>
  );
}

/* ---------- tablet header ---------- */
function StatusBar() {
  return (
    <div className="h-[42px] flex items-center justify-between pl-[27px] pr-[25px] text-[21px] text-[#222] font-['Liberation_Sans','Noto_Sans_CJK_JP',sans-serif]">
      <div className="flex gap-[19px] items-center">
        <span>9:26</span>
        <span className="text-[20px]">7月31日(木)</span>
      </div>
      <div className="flex items-center gap-[8px]">
        <svg width="24" height="20" viewBox="0 0 24 20" fill="none" stroke="#111" strokeWidth="3">
          <path d="M1.5 7.5c6-5.5 15-5.5 21 0M5.5 11.5c4-3.5 9-3.5 13 0" />
          <path d="M9 15.5c2-1.6 4-1.6 6 0L12 19z" fill="#111" strokeWidth="1" />
        </svg>
        <span>86%</span>
        <div className="flex items-center gap-[1px]">
          <div className="w-[39px] h-[20px] rounded-[5px] border-[1.5px] border-[#aaaaaa] p-[2px]">
            <div className="w-[85%] h-full rounded-[3px] bg-black" />
          </div>
          <div className="w-[3px] h-[7px] rounded-r-full bg-[#aaaaaa]" />
        </div>
      </div>
    </div>
  );
}

function Tab({ on, children }: { on?: boolean; children: ReactNode }) {
  return (
    <div className={`h-[54px] flex items-center pb-[2px] rounded-full ${on ? 'bg-white font-bold px-[25px]' : 'px-[24px]'}`}>
      {children}
    </div>
  );
}

function Header() {
  return (
    <div className="h-[145px] relative shrink-0">
      <StatusBar />
      <span className="absolute left-[130px] top-[37px] text-[76px] leading-[92px] tracking-[12px] font-extralight text-black font-['Inter',sans-serif]">Exit</span>
      <div className="absolute left-[568px] top-[48px] h-[66px] flex items-center gap-[6px] pl-[7px] pr-[9px] rounded-full bg-[#e4e4e9] text-[26px] text-[#111] font-['Noto_Sans_CJK_JP',sans-serif]">
        <Tab>リスト</Tab>
        <Tab on>チャート</Tab>
        <Tab>マーケット</Tab>
        <Tab>アイデア</Tab>
        <Tab>メニュー</Tab>
      </div>
    </div>
  );
}

/* ---------- bottom bar ---------- */
const Bar = ({ w = 'w-[78.6px]', children }: { w?: string; children: ReactNode }) => <Cell w={w}>{children}</Cell>;

function Sep() {
  return <div className="w-px h-[58px] bg-[#eeeeee] shrink-0" />;
}

function BottomBar() {
  return (
    <div className="h-[127px] pb-[40px] flex items-center text-[#1a1a1a] shrink-0 border-t border-t-[#f2f2f2]">
      <div className="w-[629px] shrink-0 relative h-full font-['Liberation_Sans',sans-serif]">
        <div className="absolute left-[64px] top-0 h-[86px] w-[320px] overflow-hidden">
          <div className="absolute left-0 top-[-9px] flex text-[26px] leading-[26px] text-[#d4d4d4]">
            <span className="w-[160px]">USDJPY</span>
            <span>1M</span>
          </div>
          <div className="absolute left-0 top-[27px] flex items-center text-[26px] leading-[30px] text-[#111]">
            <span className="w-[160px]">EURUSD</span>
            <span className="text-[27px]">15m</span>
          </div>
          <div className="absolute left-0 top-[69px] flex text-[26px] leading-[26px] text-[#d4d4d4]">
            <span className="w-[160px]">GBPUSD</span>
            <span>1H</span>
          </div>
        </div>
        <div className="absolute left-[19px] top-[27px]">
          <Logo size={32} />
        </div>
      </div>
      <Bar>
        <Ic>
          <path d="M15 24L32 7.5Q35 5 38 7.5L40 10Q41 12 39 14L22 30.5 15 32.5zM15 24L22 30.5" />
          <path d="M13 33C7 34 7 41 12 41 17 41 20 34 29 34 34 34 38 37 40 41" />
        </Ic>
      </Bar>
      <Bar>
        <Ic>
          <path d="M10.5 21L20.5 12.7 27 19.3 37 9.3" />
          <path d="M10.5 37.7V32H19V37.7zM19 37.7V27.7H28.5V37.7zM30 37.7V22H38.5V37.7z" />
        </Ic>
      </Bar>
      <Bar>
        <Ic>
          <rect x="12.3" y="11" width="11.7" height="10.7" rx="3.5" />
          <rect x="27.3" y="11" width="11.7" height="10.7" rx="3.5" />
          <rect x="12.3" y="26" width="11.7" height="10.7" rx="3.5" />
          <rect x="27.3" y="26" width="11.7" height="10.7" rx="3.5" />
        </Ic>
      </Bar>
      <Bar>
        <Ic>
          <circle cx="24" cy="24" r="17.7" />
          <path d="M24 15.7v16.6M15.7 24h16.6" />
        </Ic>
      </Bar>
      <Bar>
        <Ic>
          <circle cx="24.3" cy="26.7" r="15" />
          <path d="M24.3 16V26.7H17M6.7 16.7L15 9.3M33.3 9.3L41.7 16.7" />
        </Ic>
      </Bar>
      <Bar>
        <Ic>
          <path d="M17.7 8.7V14.3M17.7 34.3V40M31.7 12.7V18.7M31.7 29.3V35.3" />
          <rect x="14.7" y="14.3" width="6.3" height="20" />
          <rect x="28.7" y="18.7" width="5.7" height="10.6" />
        </Ic>
      </Bar>
      <Bar>
        <Ic>
          <path d="M24.7 14L12.3 25.3 24.7 36zM36.3 14L24.7 25.3 36.3 36z" />
        </Ic>
      </Bar>
      <Bar>
        <Ic>
          <path d="M7.3 20L24.7 10 42.3 20 24.7 30.3zM7.3 29.3L24.7 39.3 42.3 29.3" />
        </Ic>
      </Bar>
      <Bar>
        <Ic>
          <path d="M9.3 16.7H26M36 16.7H42M9.3 33.3H14.3M24.3 33.3H42" />
          <circle cx="31" cy="16.7" r="5" />
          <circle cx="19.3" cy="33.3" r="5" />
        </Ic>
      </Bar>
      <div className="ml-[9px]">
        <Sep />
      </div>
      <div className="ml-[6px]">
        <Bar w="w-[78px]">
          <svg width="48" height="48" viewBox="0 0 48 48" fill="none" strokeLinecap="round" strokeLinejoin="round">
            <path d="M9 31L18.7 23 25 30" stroke="#1a1a1a" strokeWidth="8.6" />
            <path d="M9 31L18.7 23 25 30" stroke="#fff" strokeWidth="3.8" />
            <path d="M27 17L33 23 39.5 16.5" stroke="#1a1a1a" strokeWidth="8.6" />
            <path d="M27 17L33 23 39.5 16.5" stroke="#fff" strokeWidth="3.8" />
          </svg>
        </Bar>
      </div>
      <div className="ml-[7px]">
        <Sep />
      </div>
      <div className="ml-[7px] flex items-center h-full">
        <Bar>
          <Ic>
            <path d="M21.7 16.5L15 23.3 21.7 30M15 23.3H26C31 23.3 34.3 27 34.3 32" />
          </Ic>
        </Bar>
        <Bar>
          <Ic>
            <path d="M18 8.7H13A6 6 0 0 0 7.3 14.7V19M30 8.7H35A6 6 0 0 1 41 14.7V19M18 40H13A6 6 0 0 1 7.3 34V29.5M30 40H35A6 6 0 0 0 41 34V29.5" />
          </Ic>
        </Bar>
        <Bar>
          <svg width="48" height="48" viewBox="0 0 48 48" fill="none" stroke="currentColor" strokeWidth="3">
            <path d="M27 11.7H38V22M13 26.7V36H23.7" />
          </svg>
        </Bar>
        <Bar>
          <div className="text-[#9b9b9b]">
            <Ic>
              <path d="M26.3 16.5L33 23.3 26.3 30M33 23.3H22C17 23.3 13.7 27 13.7 32" />
            </Ic>
          </div>
        </Bar>
      </div>
      <div className="ml-[7px]">
        <Sep />
      </div>
      <div className="ml-[7px] flex items-center h-full">
        <Bar>
          <Ic>
            <path d="M18 33C13 30 10 26 10 21A14.5 14.5 0 0 1 39 21C39 26 36 30 31 33zM15.5 34H33.5V38H15.5zM19.5 38V42H29.5V38M24.6 13V29M16.6 21H32.6" />
          </Ic>
        </Bar>
        <Bar>
          <Ic>
            <path d="M25 7V30M18 14L25 7 32 14M18 18.5H11A3 3 0 0 0 8 21.5V39A3 3 0 0 0 11 42H39A3 3 0 0 0 42 39V21.5A3 3 0 0 0 39 18.5H33" />
          </Ic>
        </Bar>
      </div>
    </div>
  );
}

export default function App() {
  return (
    <div className="w-[2360px] h-[1487px] bg-[#1f1c1b] flex flex-col overflow-hidden">
      <Toolbar />
      <div className="mx-[211px] bg-white flex flex-col h-[1347px]">
        <Header />
        <div className="grid grid-cols-[968px_967px] grid-rows-[537px_535px] gap-[3px] bg-[#efefef] h-[1075px]">
          <DayPane />
          <HourPane />
          <FourPane />
          <FifteenPane />
        </div>
        <BottomBar />
      </div>
      <div className="flex-1 flex items-center justify-center pt-[9px]">
        <div className="w-[630px] h-[11px] rounded-full bg-white" />
      </div>
    </div>
  );
}
